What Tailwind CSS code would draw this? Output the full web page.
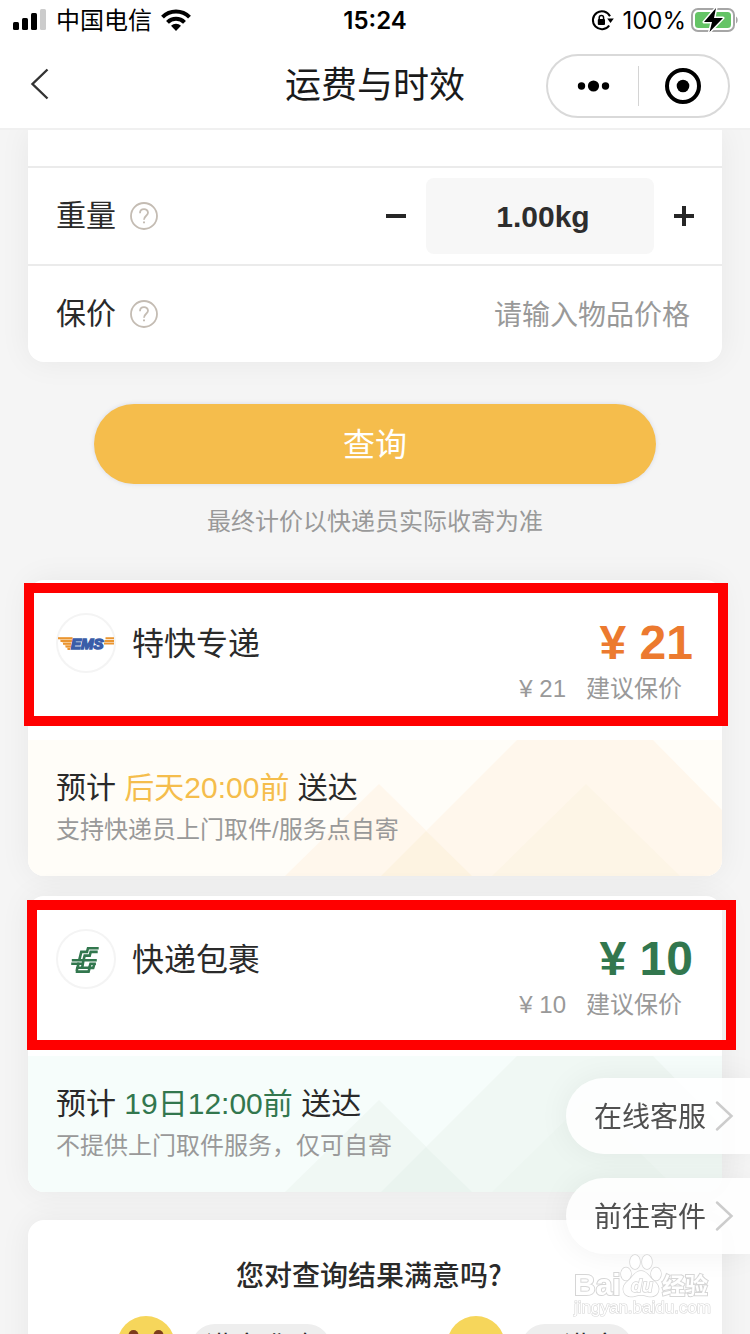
<!DOCTYPE html>
<html lang="zh-CN">
<head>
<meta charset="utf-8">
<meta name="viewport" content="width=device-width, initial-scale=1">
<title>运费与时效</title>
<script src="https://cdn.jsdelivr.net/npm/@tailwindcss/browser@4"></script>
</head>
<body class="flex h-screen flex-col overflow-hidden bg-[#f5f5f5] font-['Liberation_Sans','Noto_Sans_CJK_SC',sans-serif] text-[#2a2a2a]">

<header class="relative z-10 shrink-0 border-b-2 border-[#f0f0f0] bg-white text-black">
  <div class="grid h-10 grid-cols-[1fr_auto_1fr] items-center px-3 text-2xl leading-9">
    <div class="flex items-center gap-2">
      <svg class="h-6 w-9" viewBox="0 0 36 24" aria-label="信号">
        <rect x="1" y="14" width="6" height="8" rx="1.5"/><rect x="10" y="10" width="6" height="12" rx="1.5"/><rect x="19" y="5" width="6" height="17" rx="1.5"/><rect x="28" y="1" width="6" height="21" rx="1.5" fill="#ccc"/>
      </svg>
      <span class="pt-0.5">中国电信</span>
      <svg class="h-6 w-8" viewBox="0 0 32 24" fill="none" stroke="#000" stroke-width="4" aria-label="无线网络">
        <path d="M2.500 9.200a19 19 0 0 1 27 0"/><path d="M7.500 14.400a12 12 0 0 1 17 0"/><path d="M11 17.800a7.200 7.200 0 0 1 10 0L16 23z" fill="#000" stroke="none"/>
      </svg>
    </div>
    <time class="pt-0.5 font-['Inter',sans-serif] font-semibold">15:24</time>
    <div class="flex items-center justify-end gap-1">
      <svg class="mr-1 size-6" viewBox="0 0 24 24" fill="none" stroke="#000" stroke-width="2" aria-label="旋转锁定">
        <path d="M20 8.300A9 9 0 1 0 19.200 17.500"/><path d="M17.200 10.500h6.600l-3.300 4.500z" fill="#000" stroke="none"/><rect x="7.800" y="11" width="7.200" height="6" rx="1" fill="#000" stroke="none"/><path d="M9.200 11.500V9.800a2.200 2.200 0 0 1 4.400 0v1.700" stroke-width="1.500"/>
      </svg>
      <span class="pt-0.5 font-['Inter',sans-serif]">100%</span>
      <svg class="h-6 w-12" viewBox="0 0 48 24" aria-label="电池">
        <rect x="2" y="1" width="42" height="22" rx="6" fill="#fff" stroke="#a6a6a6" stroke-width="2"/><rect x="5" y="4" width="36" height="16" rx="3.500" fill="#65c466"/><path d="M46 8.500c2.200 1.500 2.200 5.500 0 7z" fill="#a6a6a6"/><path d="M26 0 14 14h8L19.500 24 33 10h-9z" fill="#000" stroke="#fff" stroke-width="3" paint-order="stroke" stroke-linejoin="round"/>
      </svg>
    </div>
  </div>
  <nav class="grid h-22 grid-cols-[1fr_auto_1fr] items-center pr-5 pl-7">
    <button class="flex h-12 w-8 items-center" aria-label="返回">
      <svg class="h-8 w-6" viewBox="0 0 24 32" fill="none" stroke="#333" stroke-width="2.400"><path d="M19.500 1.500 4.500 16l15 14.500"/></svg>
    </button>
    <h1 class="pt-1 pr-2 text-4xl leading-[48px] text-[#1a1a1a]">运费与时效</h1>
    <div class="mt-1 flex h-16 w-46 items-center justify-self-end rounded-full border-2 border-[#d9d9d9]">
      <button class="flex flex-1 justify-center" aria-label="更多">
        <svg class="h-4 w-9" viewBox="0 0 36 16"><circle cx="6.500" cy="8" r="3.700"/><circle cx="18.500" cy="8" r="5.600"/><circle cx="30.500" cy="8" r="3.700"/></svg>
      </button>
      <span class="h-10 w-px bg-[#d4d4d4]"></span>
      <button class="flex flex-1 justify-center" aria-label="关闭">
        <svg class="size-9" viewBox="0 0 36 36"><circle cx="18" cy="18" r="16" fill="none" stroke="#000" stroke-width="4"/><circle cx="18" cy="18" r="6.300"/></svg>
      </button>
    </div>
  </nav>
</header>

<main class="flex-1 px-7">
  <form>
    <section class="rounded-b-2xl bg-white shadow-[0_0_32px_rgba(0,0,0,0.06)]">
      <div class="h-9"></div>
      <div class="flex h-[98px] items-center border-t-2 border-[#ebebeb] px-7">
        <label for="weight" class="text-[30px] leading-10">重量</label>
        <button type="button" class="ml-3.5" aria-label="重量说明">
          <svg class="size-7" viewBox="0 0 28 28" fill="none" stroke="#c4bcb3"><circle cx="14" cy="14" r="13" stroke-width="1.800"/><path d="M10 11.200c0-5.600 8-5.300 8-.5 0 3-4 3.200-4 7" stroke-width="1.800"/><path d="M14 19.400v1.800" stroke-width="2"/></svg>
        </button>
        <div class="-mr-5 ml-auto flex items-center">
          <button type="button" class="flex w-15 justify-center" aria-label="减少"><svg class="size-5" viewBox="0 0 20 20"><path d="M0 8h20v4H0z" fill="#262626"/></svg></button>
          <input id="weight" value="1.00kg" class="h-19 w-57 rounded-lg bg-[#f7f7f7] pt-0.5 pl-1.5 text-center text-[30px] font-bold text-[#2d2d2d]">
          <button type="button" class="flex w-15 justify-center" aria-label="增加"><svg class="size-5" viewBox="0 0 20 20"><path d="M0 8h8V0h4v8h8v4h-8v8H8v-8H0z" fill="#262626"/></svg></button>
        </div>
      </div>
      <div class="flex h-[98px] items-center border-t-2 border-[#ebebeb] px-7">
        <label for="value" class="text-[30px] leading-10">保价</label>
        <button type="button" class="ml-3.5" aria-label="保价说明">
          <svg class="size-7" viewBox="0 0 28 28" fill="none" stroke="#c4bcb3"><circle cx="14" cy="14" r="13" stroke-width="1.800"/><path d="M10 11.200c0-5.600 8-5.300 8-.5 0 3-4 3.200-4 7" stroke-width="1.800"/><path d="M14 19.400v1.800" stroke-width="2"/></svg>
        </button>
        <input id="value" placeholder="请输入物品价格" class="ml-auto h-12 w-80 pt-1 pr-1 text-right text-[28px] placeholder:text-[#999]">
      </div>
    </section>
    <button type="button" class="mx-auto mt-[42px] block h-20 w-[81%] rounded-full bg-[#f5bd4c] pt-0.5 text-[32px] text-white shadow-[0_0_4px_rgba(120,140,200,0.25)]">查询</button>
  </form>
  <p class="mt-5 text-center text-2xl leading-9 text-[#999]">最终计价以快递员实际收寄为准</p>

  <section class="relative mt-10 rounded-2xl bg-white shadow-[0_0_32px_rgba(0,0,0,0.06)]">
    <div class="flex h-40 justify-between px-7 pt-[33px]">
      <div class="flex h-15 items-center">
        <svg class="size-15" viewBox="0 0 60 60" aria-label="EMS">
          <circle cx="30" cy="30" r="29" fill="#fff" stroke="#f4f4f4" stroke-width="2"/>
          <path d="M2 24.200h14.500L14 37h-1.500z" fill="#f8d9ae"/><path d="M2 25.200h14.500M4.500 28h11.500M7 30.800h8M9.500 33.500h5.500M11.500 36h2.500M49.500 25.200H58M48.500 27.900H58M48 30.500h10" stroke="#ea9530" stroke-width="2"/>
          <text x="15" y="36" font-family="Liberation Sans" font-size="15" font-weight="700" font-style="italic" fill="#3a5da8" stroke="#3a5da8" stroke-width="1.500">EMS</text>
        </svg>
        <h2 class="ml-4 pt-0.5 text-[32px] leading-12">特快专递</h2>
      </div>
      <div class="pt-0.5 text-right">
        <p class="pr-px text-5xl leading-[56px] font-bold text-[#ec7a2f]">¥ 21</p>
        <p class="flex justify-end gap-5 pr-3 text-2xl leading-9 text-[#999]"><span>¥ 21</span><span>建议保价</span></p>
      </div>
    </div>
    <div class="relative h-[136px] overflow-hidden rounded-b-2xl bg-[#fffdf8] px-7 pt-6">
      <svg class="absolute inset-0 size-full" viewBox="0 0 694 136" preserveAspectRatio="xMaxYMax slice">
        <path d="M257 136 351 44l93 92z" fill="#fff7ec"/><path d="M353 136 489 0h136l69 70v66z" fill="#fff7ec"/><path d="M353 136l45-45 46 45z" fill="#fdf3e1"/><path d="M464 136l94-92 94 92z" fill="#fdf5e6"/>
      </svg>
      <div class="relative">
        <p class="text-[30px] leading-12">预计 <span class="text-[#f5bd4c]">后天20:00前</span> 送达</p>
        <p class="text-2xl leading-9 text-[#999]">支持快递员上门取件/服务点自寄</p>
      </div>
    </div>
    <div class="pointer-events-none absolute top-[3px] -right-1.5 -left-1 h-[143px] border-10 border-[#f00]"></div>
  </section>

  <section class="relative mt-5 rounded-2xl bg-white shadow-[0_0_32px_rgba(0,0,0,0.06)]">
    <div class="flex h-40 justify-between px-7 pt-[33px]">
      <div class="flex h-15 items-center">
        <svg class="size-15" viewBox="0 0 60 60" fill="none" aria-label="中国邮政">
          <circle cx="30" cy="30" r="29" fill="#fff" stroke="#f4f4f4" stroke-width="2"/>
          <g stroke="#32774e" stroke-width="2.600"><path d="M42.700 19.200H32l-1 3.700h-5.700l-2 8"/><path d="M41.700 22.900h-7l-1 3.700h-5l-1.200 4.500"/><path d="M15.800 31.200h25M15.200 34.800h11M27.500 31l-1.300 7.500"/><path d="M39.900 34.700h-5.400l-1.200 4H21.500l1.300-5"/><path d="M19.700 42.600h12.900l1-3.700h3.600l1.200-4M20.600 42l1-4"/></g>
        </svg>
        <h2 class="ml-4 pt-0.5 text-[32px] leading-12">快递包裹</h2>
      </div>
      <div class="pt-0.5 text-right">
        <p class="pr-px text-5xl leading-[56px] font-bold text-[#32774e]">¥ 10</p>
        <p class="flex justify-end gap-5 pr-3 text-2xl leading-9 text-[#999]"><span>¥ 10</span><span>建议保价</span></p>
      </div>
    </div>
    <div class="relative h-[136px] overflow-hidden rounded-b-2xl bg-[#f6fdfb] px-7 pt-6">
      <svg class="absolute inset-0 size-full" viewBox="0 0 694 136" preserveAspectRatio="xMaxYMax slice">
        <path d="M257 136 351 44l93 92z" fill="#f0f8f4"/><path d="M353 136 489 0h136l69 70v66z" fill="#f0f8f4"/><path d="M353 136l45-45 46 45z" fill="#eaf4ef"/><path d="M464 136l94-92 94 92z" fill="#edf6f1"/>
      </svg>
      <div class="relative">
        <p class="text-[30px] leading-12">预计 <span class="text-[#32774e]">19日12:00前</span> 送达</p>
        <p class="text-2xl leading-9 text-[#999]">不提供上门取件服务，仅可自寄</p>
      </div>
    </div>
    <div class="pointer-events-none absolute top-1 -right-3.5 -left-px h-[150px] border-10 border-[#f00]"></div>
  </section>

  <section class="mt-7 rounded-t-2xl bg-white pt-8 shadow-[0_0_32px_rgba(0,0,0,0.06)]">
    <h2 class="pr-3 text-center font-['Noto_Sans_CJK_SC',sans-serif] text-[28px] leading-11 font-medium">您对查询结果满意吗?</h2>
    <div class="mt-5 grid grid-cols-[330px_1fr] pl-[89px]">
      <button class="flex items-start gap-4">
        <svg class="size-[58px]" viewBox="0 0 58 58"><circle cx="29" cy="29" r="29" fill="#f6d65b"/><circle cx="16.500" cy="19" r="5" fill="#7d3b1c"/><circle cx="41.500" cy="19" r="5" fill="#7d3b1c"/><path d="M14 34a15 15 0 0 0 30 0z" fill="#7d3b1c"/></svg>
        <span class="mt-2 rounded-full bg-[#eee] px-3.5 text-[28px] leading-12">满意准确</span>
      </button>
      <button class="flex items-start gap-4">
        <svg class="size-[58px]" viewBox="0 0 58 58"><circle cx="29" cy="29" r="29" fill="#f6d65b"/><circle cx="17" cy="26" r="4" fill="#7d3b1c"/><circle cx="41" cy="26" r="4" fill="#7d3b1c"/><path d="M18 44q11-10 22 0" fill="none" stroke="#7d3b1c" stroke-width="3"/></svg>
        <span class="mt-2 rounded-full bg-[#eee] px-3.5 text-[28px] leading-12">不满意</span>
      </button>
    </div>
  </section>
</main>

<aside class="fixed right-0 bottom-20 z-20 flex flex-col gap-6 text-[28px] text-[#505050]">
  <a href="#" class="flex h-19 items-center gap-2 rounded-l-full bg-white/85 pr-4 pl-7 shadow-[0_0_32px_rgba(0,0,0,0.06)]"><span class="pt-1">在线客服</span>
    <svg class="h-8 w-5" viewBox="0 0 20 32" fill="none" stroke="#ccc" stroke-width="2.500" stroke-linecap="round"><path d="M3 2.500 17.500 16 3 29.500"/></svg></a>
  <a href="#" class="flex h-19 items-center gap-2 rounded-l-full bg-white/85 pr-4 pl-7 shadow-[0_0_32px_rgba(0,0,0,0.06)]"><span class="pt-1">前往寄件</span>
    <svg class="h-8 w-5" viewBox="0 0 20 32" fill="none" stroke="#ccc" stroke-width="2.500" stroke-linecap="round"><path d="M3 2.500 17.500 16 3 29.500"/></svg></a>
</aside>

<svg class="pointer-events-none fixed right-9 bottom-3 z-30 h-17 w-36" viewBox="0 0 144 68" fill="#fff" stroke="#d6d6d6" stroke-width="2" paint-order="stroke" font-family="Liberation Sans, Noto Sans CJK SC" font-weight="700" aria-label="Baidu 经验">
  <text x="4" y="41" font-size="30">Bai</text>
  <g stroke-width="1.500"><ellipse cx="56" cy="20" rx="5" ry="6.500"/><ellipse cx="65" cy="8" rx="5" ry="7"/><ellipse cx="77" cy="8" rx="5" ry="7"/><ellipse cx="86" cy="20" rx="5" ry="6.500"/><path d="M71 17c6 0 8 6 13 10 9 7 4 18-7 15q-6-2-12 0c-11 3-16-8-7-15 5-4 7-10 13-10z"/></g>
  <text x="61" y="38" font-size="18" font-style="italic" stroke-width="1.500">du</text>
  <text x="92" y="40" font-size="23">经验</text>
  <text x="4" y="59" font-size="17" stroke-width="1.200" font-weight="400">jingyan.baidu.com</text>
</svg>
</body>
</html>
